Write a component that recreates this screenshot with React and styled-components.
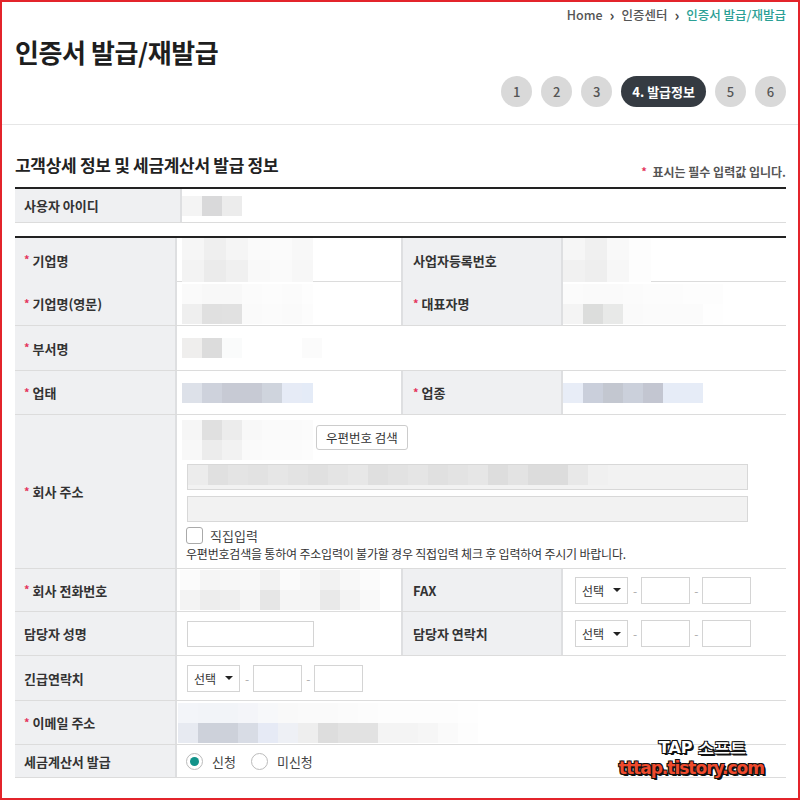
import React from 'react'
import styled, { createGlobalStyle } from 'styled-components'

const GlobalStyle = createGlobalStyle`
  html, body {
    margin: 0;
    padding: 0;
    background: #fff;
  }
  body {
    font-family: "Noto Sans CJK KR", "Noto Sans", sans-serif;
    color: #333;
  }
  * { box-sizing: border-box; }
`

const Mosaic = ({ rows, size = 20, width }) => (
  <MosaicGrid $cols={rows[0].length} $size={size} style={{ width }}>
    {rows.flat().map((c, i) => (
      <MosaicCell key={i} style={{ background: c }} />
    ))}
  </MosaicGrid>
)

const Req = () => <Star>*</Star>

const Phone = () => (
  <PhoneGroup>
    <SelectBox>
      선택 <Caret />
    </SelectBox>
    <Dash>-</Dash>
    <SmallInput />
    <Dash>-</Dash>
    <SmallInput />
  </PhoneGroup>
)

const App = () => {
  return (
    <Frame>
      <GlobalStyle />
      <Breadcrumb>
        <span>Home</span>
        <Sep>›</Sep>
        <span>인증센터</span>
        <Sep>›</Sep>
        <Current>인증서 발급/재발급</Current>
      </Breadcrumb>
      <Title>인증서 발급/재발급</Title>
      <Steps>
        <Step>1</Step>
        <Step>2</Step>
        <Step>3</Step>
        <Step $active>4. 발급정보</Step>
        <Step>5</Step>
        <Step>6</Step>
      </Steps>
      <Divider />

      <SectionHead>
        <SectionTitle>고객상세 정보 및 세금계산서 발급 정보</SectionTitle>
        <Note>
          <Req /> 표시는 필수 입력값 입니다.
        </Note>
      </SectionHead>

      <Table>
        <Row $cols="167px 1fr" $h={34}>
          <Label>사용자 아이디</Label>
          <Value $pad="0">
            <Mosaic rows={[['#f4f4f4', '#d9d9da', '#ececec']]} />
          </Value>
        </Row>
      </Table>

      <Table $gap>
        <Row $h={44}>
          <Label>
            <Req />기업명
          </Label>
          <Value $pad="0 0 0 5px">
            <Mosaic
              width={131}
              rows={[
                ['#f6f6f6', '#efefef', '#f5f5f5', '#fafafa', '#fbfbfb', '#f8f8f8', '#fcfcfc'],
                ['#f3f3f3', '#ebebeb', '#f0f0f0', '#f9f9f9', '#fafafa', '#f7f7f7', '#fbfbfb'],
              ]}
              size={22}
            />
          </Value>
          <Label $side>사업자등록번호</Label>
          <Value $pad="0">
            <Mosaic
              rows={[
                ['#f6f6f6', '#f0f0f0', '#f9f9f9', '#fdfdfd'],
                ['#f1f1f1', '#eeeeee', '#f7f7f7', '#fdfdfd'],
              ]}
              size={22}
            />
          </Value>
        </Row>
        <Row $h={44}>
          <Label>
            <Req />기업명(영문)
          </Label>
          <Value $pad="0 0 0 5px">
            <Mosaic
              width={131}
              rows={[
                ['#fafafa', '#f8f8f8', '#f8f8f8', '#fbfbfb', '#fcfcfc', '#fbfbfb', '#fdfdfd'],
                ['#efefef', '#e0e0e0', '#e1e1e1', '#fafafa', '#fbfbfb', '#fafafa', '#fcfcfc'],
              ]}
              size={20}
            />
          </Value>
          <Label $side>
            <Req />대표자명
          </Label>
          <Value $pad="0">
            <Mosaic
              rows={[
                ['#fbfbfb', '#fafafa', '#fafafa', '#fbfbfb', '#fcfcfc', '#fcfcfc', '#fdfdfd', '#fdfdfd'],
                ['#f4f4f4', '#dcdddc', '#e8e9e8', '#fafafa', '#fbfbfb', '#fbfbfb', '#fbfbfb', '#fefefe'],
              ]}
              size={20}
            />
          </Value>
        </Row>
        <Row $cols="162px 1fr" $h={45}>
          <Label>
            <Req />부서명
          </Label>
          <Value $pad="0 0 0 5px">
            <Mosaic
              rows={[['#efeeed', '#dcdcdc', '#fafbfb', '#ffffff', '#ffffff', '#ffffff', '#fbfbfb']]}
              size={20}
            />
          </Value>
        </Row>
        <Row $h={44}>
          <Label>
            <Req />업태
          </Label>
          <Value $pad="0 0 0 5px">
            <Mosaic
              width={131}
              rows={[['#dde1e9', '#ced2dc', '#c7cad4', '#c7cad4', '#cfd4dd', '#e6ebf6', '#e4ebf7']]}
              size={20}
            />
          </Value>
          <Label $side>
            <Req />업종
          </Label>
          <Value $pad="0">
            <Mosaic
              rows={[['#e8edf7', '#cacfdb', '#c3c7d0', '#cbd0db', '#c3c6d1', '#e6ecf7', '#e6ecf7']]}
              size={20}
            />
          </Value>
        </Row>
        <Row $cols="162px 1fr" $h={154}>
          <Label>
            <Req />회사 주소
          </Label>
          <AddressCell>
            <ZipLine>
              <Mosaic
                width={131}
                rows={[
                  ['#f6f6f6', '#e0e0e0', '#ececec', '#f8f8f8', '#fafafa', '#fafafa', '#fbfbfb'],
                  ['#f8f8f8', '#ececec', '#f2f2f2', '#fafafa', '#fbfbfb', '#fbfbfb', '#fcfcfc'],
                ]}
                size={20}
              />
              <Button>우편번호 검색</Button>
            </ZipLine>
            <AddrInput>
              <Mosaic
                rows={[
                  ['#ececec', '#e0e0e0', '#e4e4e4', '#e2e2e2', '#e6e6e6', '#e3e3e3', '#e0e0e0', '#e4e4e4', '#e7e7e7', '#dfdfdf', '#e2e2e2', '#e5e5e5', '#e0e0e0', '#e3e3e3', '#e6e6e6', '#dddddd', '#e3e3e3', '#dcdcdc', '#dcdcdc', '#e8e8e8', '#f0f0f0'],
                ]}
                size={20}
              />
            </AddrInput>
            <AddrInput />
            <CheckLine>
              <CheckBox />
              직집입력
            </CheckLine>
            <Hint>우편번호검색을 통하여 주소입력이 불가할 경우 직접입력 체크 후 입력하여 주시기 바랍니다.</Hint>
          </AddressCell>
        </Row>
        <Row $h={43}>
          <Label>
            <Req />회사 전화번호
          </Label>
          <Value $pad="0 0 0 3px">
            <Mosaic
              rows={[
                ['#fbfbfb', '#f5f5f5', '#f7f7f7', '#f8f8f8', '#f2f2f2', '#fafafa', '#f6f6f6', '#f2f2f2', '#f8f8f8', '#fbfbfb'],
                ['#f3f3f3', '#ededed', '#efefef', '#f5f5f5', '#e6e6e6', '#f5f5f5', '#f5f5f5', '#e9e9e9', '#f3f3f3', '#f9f9f9'],
              ]}
              size={20}
            />
          </Value>
          <Label $side>FAX</Label>
          <Value $pad="0 0 0 12px">
            <Phone />
          </Value>
        </Row>
        <Row $h={44}>
          <Label>담당자 성명</Label>
          <Value>
            <NameInput />
          </Value>
          <Label $side>담당자 연락치</Label>
          <Value $pad="0 0 0 12px">
            <Phone />
          </Value>
        </Row>
        <Row $cols="162px 1fr" $h={45}>
          <Label>긴급연락치</Label>
          <Value>
            <Phone />
          </Value>
        </Row>
        <Row $cols="162px 1fr" $h={44}>
          <Label>
            <Req />이메일 주소
          </Label>
          <Value $pad="0 0 0 1px">
            <Mosaic
              rows={[
                ['#f3f5f9', '#f2f4f8', '#f2f4f8', '#f4f5f9', '#f7f8fa', '#f9f9f9', '#fafafa', '#fafafa', '#fbfbfb', '#fcfcfc', '#fdfdfd', '#fdfdfd', '#fdfdfd', '#fdfdfd', '#fefefe'],
                ['#e7eaf1', '#cdd1da', '#cdd1da', '#d8dce5', '#e6eaf5', '#eef0f5', '#eeeeee', '#dddddd', '#e2e2e2', '#e2e2e2', '#f4f4f4', '#f4f4f4', '#f6f6f6', '#fafafa', '#fdfdfd'],
              ]}
              size={20}
            />
          </Value>
        </Row>
        <Row $cols="162px 1fr" $h={33}>
          <Label>세금계산서 발급</Label>
          <Value $pad="0 0 0 9px">
            <RadioLabel>
              <Radio $checked />
              신청
            </RadioLabel>
            <RadioLabel>
              <Radio />
              미신청
            </RadioLabel>
          </Value>
        </Row>
      </Table>

      <Watermark>
        <MarkTop>TAP 소프트</MarkTop>
        <MarkBottom>tttap.tistory.com</MarkBottom>
      </Watermark>
    </Frame>
  )
}

export default App

const Frame = styled.div`
  position: relative;
  width: 800px;
  height: 800px;
  border: 2px solid #e3242b;
  padding: 0 12px 0 13px;
  overflow: hidden;
  background: #fff;
`

const Breadcrumb = styled.div`
  display: flex;
  justify-content: flex-end;
  align-items: center;
  gap: 7px;
  height: 22px;
  margin-top: 1px;
  font-size: 12.5px;
  font-weight: 500;
  color: #555;
`

const Sep = styled.span`
  font-size: 15px;
  font-weight: 700;
  color: #444;
`

const Current = styled.span`
  color: #2ba095;
`

const Title = styled.h1`
  margin: 10px 0 0 0;
  font-size: 26px;
  line-height: 34px;
  font-weight: 700;
  color: #1e1e1e;
  letter-spacing: -0.4px;
`

const Steps = styled.div`
  display: flex;
  justify-content: flex-end;
  gap: 9px;
  margin-top: 7px;
`

const Step = styled.div`
  display: flex;
  align-items: center;
  justify-content: center;
  height: 31px;
  min-width: 31px;
  padding: ${({ $active }) => ($active ? '0 11px' : '0')};
  border-radius: 16px;
  background: ${({ $active }) => ($active ? '#353b42' : '#d9d9d9')};
  color: ${({ $active }) => ($active ? '#fff' : '#555')};
  font-size: 13px;
  font-weight: ${({ $active }) => ($active ? 700 : 500)};
`

const Divider = styled.div`
  height: 1px;
  margin: 17px -13px 0;
  background: #e6e6e6;
`

const SectionHead = styled.div`
  display: flex;
  justify-content: space-between;
  align-items: flex-end;
  margin: 28px 0 10px 0;
`

const SectionTitle = styled.h2`
  margin: 0;
  font-size: 17px;
  line-height: 24px;
  font-weight: 700;
  color: #222;
  letter-spacing: -0.3px;
`

const Note = styled.div`
  font-size: 12px;
  font-weight: 700;
  color: #555;
  margin-bottom: -3px;
`

const Star = styled.span`
  color: #e4335b;
  font-size: 11px;
  margin-right: 3px;
  position: relative;
  top: -1px;
`

const Table = styled.div`
  margin-top: ${({ $gap }) => ($gap ? '13px' : '0')};
  border-top: 2px solid #222;
`

const Row = styled.div`
  display: grid;
  grid-template-columns: ${({ $cols }) => $cols || '162px 224px 162px 1fr'};
  height: ${({ $h }) => $h || 44}px;
  border-bottom: 1px solid #dcdcdc;
`

const Label = styled.div`
  display: flex;
  align-items: center;
  padding-left: ${({ $side }) => ($side ? '10px' : '9px')};
  background: #eff0f2;
  border-right: 2px solid #dedfe1;
  border-left: ${({ $side }) => ($side ? '2px solid #dedfe1' : 'none')};
  font-size: 13px;
  font-weight: 700;
  color: #333;
`

const Value = styled.div`
  display: flex;
  align-items: center;
  gap: 10px;
  padding: ${({ $pad }) => $pad || '0 0 0 10px'};
  font-size: 13px;
`

const MosaicGrid = styled.div`
  display: grid;
  grid-template-columns: repeat(${({ $cols }) => $cols}, ${({ $size }) => $size}px);
  grid-auto-rows: ${({ $size }) => $size}px;
  overflow: hidden;
`

const MosaicCell = styled.div``

const AddressCell = styled.div`
  display: flex;
  flex-direction: column;
  padding: 5px 0 0 10px;
`

const ZipLine = styled.div`
  display: flex;
  align-items: flex-start;
  gap: 3px;
  margin-left: -5px;
  height: 38px;
`

const Button = styled.div`
  display: flex;
  align-items: center;
  height: 25px;
  padding: 0 9px;
  margin-top: 5px;
  border: 1px solid #ccc;
  border-radius: 3px;
  background: #fff;
  font-size: 12.5px;
  color: #333;
`

const AddrInput = styled.div`
  width: 561px;
  height: 26px;
  margin-top: 6px;
  background: #f2f2f2;
  border: 1px solid #d8d8d8;
  overflow: hidden;
`

const CheckLine = styled.div`
  display: flex;
  align-items: center;
  gap: 7px;
  margin-top: 4px;
  margin-left: -1px;
  font-size: 13px;
  color: #444;
`

const CheckBox = styled.span`
  width: 17px;
  height: 17px;
  border: 1px solid #aaa;
  border-radius: 3px;
  background: #fff;
`

const Hint = styled.div`
  margin-top: 0;
  margin-left: -1px;
  font-size: 12px;
  color: #333;
  letter-spacing: -0.2px;
`

const PhoneGroup = styled.div`
  display: flex;
  align-items: center;
  gap: 4px;
`

const SelectBox = styled.div`
  display: flex;
  align-items: center;
  gap: 9px;
  width: 53px;
  height: 27px;
  padding-left: 6px;
  margin-right: 1px;
  border: 1px solid #d4d4d4;
  font-size: 12px;
  color: #333;
`

const Caret = styled.span`
  width: 0;
  height: 0;
  border-left: 4px solid transparent;
  border-right: 4px solid transparent;
  border-top: 4px solid #222;
`

const Dash = styled.span`
  font-size: 12px;
  color: #aaa;
`

const SmallInput = styled.div`
  width: 49px;
  height: 27px;
  border: 1px solid #d4d4d4;
`

const NameInput = styled.div`
  width: 127px;
  height: 26px;
  border: 1px solid #d4d4d4;
`

const RadioLabel = styled.label`
  display: flex;
  align-items: center;
  gap: 9px;
  margin-right: 5px;
  font-size: 13px;
  color: #444;
`

const Radio = styled.span`
  position: relative;
  width: 17px;
  height: 17px;
  border-radius: 50%;
  border: 1px solid #bbb;
  background: #fff;

  &::after {
    content: '';
    display: ${({ $checked }) => ($checked ? 'block' : 'none')};
    position: absolute;
    inset: 3px;
    border-radius: 50%;
    background: #12938a;
  }
`

const Watermark = styled.div`
  position: absolute;
  right: 34px;
  bottom: 21px;
  display: flex;
  flex-direction: column;
  align-items: center;
  line-height: 1;
  font-family: "DejaVu Sans", sans-serif;
  font-weight: 700;
`

const MarkTop = styled.div`
  font-size: 16px;
  color: #fff;
  letter-spacing: 0;
  margin-left: 22px;
  text-shadow: -1px -1px 0 #111, 1px -1px 0 #111, -1px 1px 0 #111, 1px 1px 0 #111, 2px 2px 0 #111;
`

const MarkBottom = styled.div`
  margin-top: 4px;
  font-size: 17px;
  color: #ef4a2d;
  letter-spacing: -1px;
  text-shadow: -1px -1px 0 #111, 1px -1px 0 #111, -1px 1px 0 #111, 1px 1px 0 #111, 2px 2px 0 #111;
`
